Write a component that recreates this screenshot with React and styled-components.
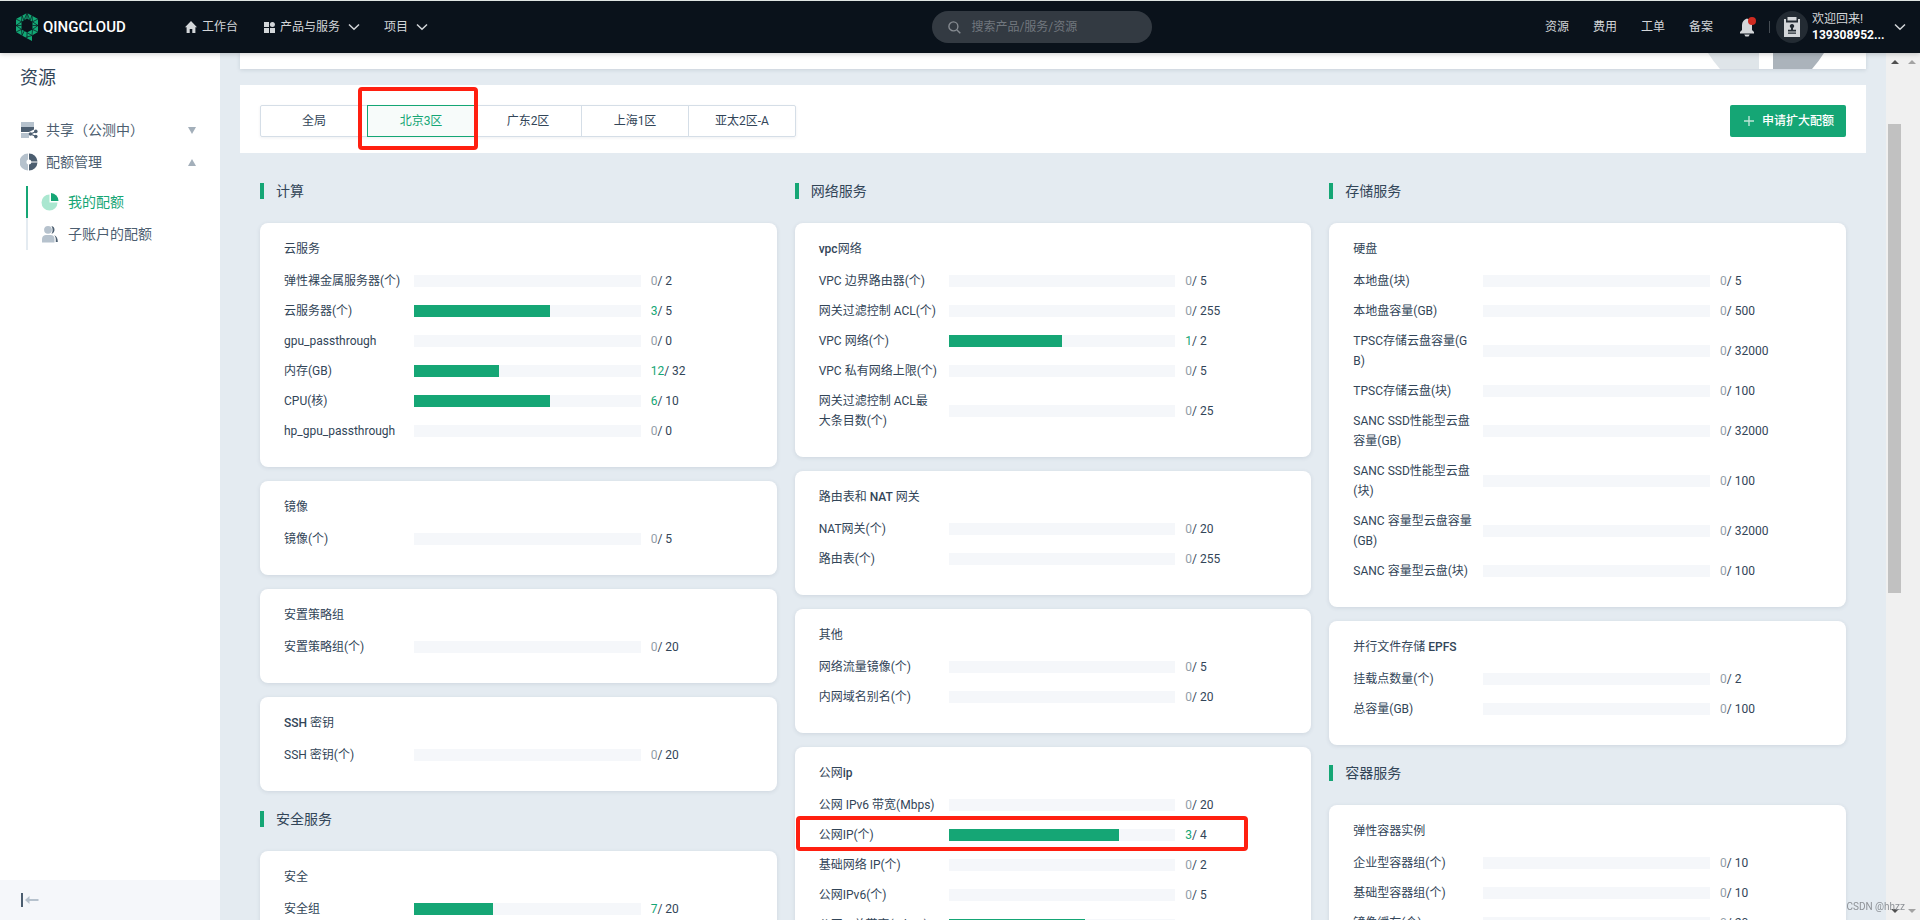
import React from 'react';
import styled, { createGlobalStyle } from 'styled-components'

const zones = ['全局', '北京3区', '广东2区', '上海1区', '亚太2区-A']

const columns = [
  [
    {
      title: '计算',
      cards: [
        {
          title: '云服务',
          rows: [
            ['弹性裸金属服务器(个)', 0, 2],
            ['云服务器(个)', 3, 5],
            ['gpu_passthrough', 0, 0],
            ['内存(GB)', 12, 32],
            ['CPU(核)', 6, 10],
            ['hp_gpu_passthrough', 0, 0],
          ],
        },
        { title: '镜像', rows: [['镜像(个)', 0, 5]] },
        { title: '安置策略组', rows: [['安置策略组(个)', 0, 20]] },
        { title: 'SSH 密钥', rows: [['SSH 密钥(个)', 0, 20]] },
      ],
    },
    {
      title: '安全服务',
      cards: [{ title: '安全', rows: [['安全组', 7, 20]] }],
    },
  ],
  [
    {
      title: '网络服务',
      cards: [
        {
          title: 'vpc网络',
          rows: [
            ['VPC 边界路由器(个)', 0, 5],
            ['网关过滤控制 ACL(个)', 0, 255],
            ['VPC 网络(个)', 1, 2],
            ['VPC 私有网络上限(个)', 0, 5],
            ['网关过滤控制 ACL最大条目数(个)', 0, 25],
          ],
        },
        {
          title: '路由表和 NAT 网关',
          rows: [
            ['NAT网关(个)', 0, 20],
            ['路由表(个)', 0, 255],
          ],
        },
        {
          title: '其他',
          rows: [
            ['网络流量镜像(个)', 0, 5],
            ['内网域名别名(个)', 0, 20],
          ],
        },
        {
          title: '公网ip',
          rows: [
            ['公网 IPv6 带宽(Mbps)', 0, 20],
            ['公网IP(个)', 3, 4, true],
            ['基础网络 IP(个)', 0, 2],
            ['公网IPv6(个)', 0, 5],
            ['公网IP总带宽(Mbps)', 12, 20],
          ],
        },
      ],
    },
  ],
  [
    {
      title: '存储服务',
      cards: [
        {
          title: '硬盘',
          rows: [
            ['本地盘(块)', 0, 5],
            ['本地盘容量(GB)', 0, 500],
            ['TPSC存储云盘容量(GB)', 0, 32000],
            ['TPSC存储云盘(块)', 0, 100],
            ['SANC SSD性能型云盘容量(GB)', 0, 32000],
            ['SANC SSD性能型云盘(块)', 0, 100],
            ['SANC 容量型云盘容量(GB)', 0, 32000],
            ['SANC 容量型云盘(块)', 0, 100],
          ],
        },
        {
          title: '并行文件存储 EPFS',
          rows: [
            ['挂载点数量(个)', 0, 2],
            ['总容量(GB)', 0, 100],
          ],
        },
      ],
    },
    {
      title: '容器服务',
      cards: [
        {
          title: '弹性容器实例',
          rows: [
            ['企业型容器组(个)', 0, 10],
            ['基础型容器组(个)', 0, 10],
            ['镜像缓存(个)', 0, 20],
          ],
        },
      ],
    },
  ],
]

function Chevron() {
  return (
    <svg width="12" height="8" viewBox="0 0 12 8" fill="none" stroke="#d3d6d9" strokeWidth="1.5">
      <path d="M1 1.5 6 6.2 11 1.5" />
    </svg>
  )
}

function Logo() {
  return (
    <svg width="22" height="28" viewBox="0 0 22 28">
      <path
        fill="#12a875"
        fillRule="evenodd"
        d="M11 0 22 6V19L16 22.5V28L9.5 24.5 0 19V6ZM11 5.5 5.5 8.8V16.4L11 19.6 16.5 16.4V8.8Z"
      />
      <path
        fill="none"
        stroke="#0a121b"
        strokeWidth="0.7"
        d="M11 0V5.5M6 2.5 8 7.5M16 2.5 14 7.5M11 0 8 7.5M11 0 14 7.5M0 6 5.5 8.8M22 6 16.5 8.8M6 2.5 5.5 8.8M16 2.5 16.5 8.8M0 12.5 5.5 8.8M0 12.5H5.5M0 12.5 5.5 16.4M22 12.5 16.5 8.8M22 12.5H16.5M22 12.5 16.5 16.4M0 19 5.5 16.4M22 19 16.5 16.4M6 22.5 5.5 16.4M6 22.5 8.2 18M11 25V19.6M16 22.5 16.5 16.4M16 22.5 11 19.6M16 22.5 9.5 24.5"
      />
    </svg>
  )
}

function Header() {
  return (
    <TopBar>
      <Brand href="#">
        <Logo />
        <BrandName>QINGCLOUD</BrandName>
      </Brand>
      <MainNav>
        <NavLink href="#">
          <svg width="12" height="12" viewBox="0 0 12 12" fill="#d3d6d9">
            <path d="M6 0 12 6.2H10.4V12H7.3V8H4.7V12H1.6V6.2H0Z" />
          </svg>
          工作台
        </NavLink>
        <NavButton $pad={26}>
          <svg width="11" height="11" viewBox="0 0 11 11" fill="#d3d6d9">
            <rect width="5" height="5" />
            <circle cx="8.4" cy="2.6" r="2.5" />
            <rect y="6" width="5" height="5" />
            <rect x="6" y="6" width="5" height="5" />
          </svg>
          产品与服务
          <ChevronGap><Chevron /></ChevronGap>
        </NavButton>
        <NavButton $pad={24}>
          项目
          <ChevronGap><Chevron /></ChevronGap>
        </NavButton>
      </MainNav>
      <Search>
        <svg width="13" height="13" viewBox="0 0 13 13" fill="none" stroke="#868b91" strokeWidth="1.4">
          <circle cx="5.4" cy="5.4" r="4.5" />
          <path d="M8.7 8.7 12.3 12.3" />
        </svg>
        <SearchInput type="text" aria-label="搜索" placeholder="搜索产品/服务/资源" />
      </Search>
      <UserNav>
        <NavLink href="#">资源</NavLink>
        <NavLink href="#">费用</NavLink>
        <NavLink href="#">工单</NavLink>
        <NavLink href="#">备案</NavLink>
      </UserNav>
      <Bell aria-label="通知">
        <svg width="18" height="20" viewBox="0 0 18 20">
          <path fill="#d3d6d9" d="M8 1.5C5 2.6 3 4.800 3 8V13L1 15V16.5H15V15L13 13V8C13 4.800 11 2.6 8 1.5ZM5.2 17.5H10.8L9.5 19.5H6.5Z" />
          <circle cx="13" cy="4" r="4" fill="#cf2a20" />
        </svg>
      </Bell>
      <Divider />
      <Account>
        <Avatar>
          <svg width="16" height="20" viewBox="0 0 16 20">
            <path fill="#d3d6d9" d="M0 2H2V5.5H14V2H16V20H0ZM3.5 0H12.5V3.5H3.5Z" />
            <path fill="#232b33" d="M8 7A2.1 2.1 0 0 1 9 11V12.8H12V14.5H4V12.8H7V11A2.1 2.1 0 0 1 8 7ZM4 15.5H12V16.8H4Z" />
          </svg>
        </Avatar>
        <Welcome>
          <span>欢迎回来!</span>
          <strong>139308952...</strong>
        </Welcome>
        <Chevron />
      </Account>
    </TopBar>
  )
}

function Side() {
  return (
    <Sidebar>
      <SideTitle>资源</SideTitle>
      <Menu>
        <MenuButton>
          <svg width="18" height="18" viewBox="0 0 18 18">
            <path fill="#b6c2cd" d="M1 1H14V6H1ZM1 12H9V17H1Z" />
            <path fill="#4c5e70" d="M1 6H14V8.5L9 11H1Z" />
            <path fill="none" stroke="#4c5e70" strokeWidth="1.1" d="M16 10.5 10.5 13 16 15.5" />
            <g fill="#4c5e70">
              <circle cx="10.5" cy="13" r="1.8" />
              <circle cx="15.8" cy="10.4" r="1.8" />
              <circle cx="15.8" cy="15.6" r="1.8" />
            </g>
          </svg>
          <MenuText>共享（公测中）</MenuText>
          <Caret $down />
        </MenuButton>
        <MenuButton>
          <svg width="18" height="18" viewBox="0 0 18 18">
            <path fill="#b6c2cd" d="M8 0.5V6.6A2.6 2.6 0 0 0 8 11.4V17.5A8.5 8.5 0 0 1 8 0.5Z" />
            <path fill="#4c5e70" d="M9 0.5A8.5 8.5 0 0 1 17.5 8.5H11.4A2.6 2.6 0 0 0 9 6.6ZM17.5 9.5A8.5 8.5 0 0 1 9 17.5V11.4A2.6 2.6 0 0 0 11.4 9.5Z" />
          </svg>
          <MenuText>配额管理</MenuText>
          <Caret />
        </MenuButton>
      </Menu>
      <SubMenu>
        <SubLink href="#" $active>
          <svg width="18" height="18" viewBox="0 0 18 18">
            <path fill="#aae7d0" d="M8.5 1.5V9.5H16.5A8 8 0 1 1 8.5 1.5Z" />
            <path fill="#15a675" d="M10 0A8 8 0 0 1 17.5 8H10Z" />
          </svg>
          我的配额
        </SubLink>
        <SubLink href="#">
          <svg width="18" height="18" viewBox="0 0 18 18">
            <path fill="#4c5e70" d="M10.5 1C14.5 1.5 14.5 8 10.5 8.8C12 6.5 12 3.5 10.5 1ZM13 10.2C15.5 11 16.8 13 16.8 17H14.8V14C14.8 12.5 14.2 11.2 13 10.2Z" />
            <circle cx="7" cy="4.8" r="3.9" fill="#b6c2cd" />
            <path fill="#b6c2cd" d="M1 17.5V14C1 11.5 3 10 5 10H9.5C12 10 13.5 11.5 13.5 14V17.5Z" />
          </svg>
          子账户的配额
        </SubLink>
      </SubMenu>
      <SideFooter aria-label="收起">
        <svg width="18" height="14" viewBox="0 0 18 14">
          <path fill="#4c5e70" d="M0 0H2V14H0Z" />
          <path fill="#b6c2cd" d="M4 7 8.5 3V6H17.5V8H8.5V11Z" />
        </svg>
      </SideFooter>
    </Sidebar>
  )
}

function QuotaRow({ name, used, total, marked }) {
  const percent = total ? (used / total) * 100 : 0
  return (
    <Row>
      <RowName>{name}</RowName>
      <Track role="progressbar" aria-label={name} aria-valuenow={used} aria-valuemax={total}>
        <Fill style={{ width: `${percent}%` }} />
      </Track>
      <Amount>
        <Used $on={used > 0}>{used}</Used>/ {total}
      </Amount>
      {marked && <RowMark />}
    </Row>
  )
}

// latin words in a card title are a bit heavier than the chinese ones
function Title({ text }) {
  return (
    <CardTitle>
      {text.split(/([a-z]+)/i).map((part, i) => (i % 2 ? <Latin key={i}>{part}</Latin> : part))}
    </CardTitle>
  )
}

function App() {
  return (
    <Page>
      <GlobalStyle />
      <Header />
      <Body>
        <Side />
        <Main>
          <Banner>
            <svg width="116" height="16" viewBox="0 0 116 16">
              <path fill="#dfe5e9" d="M0 0H51V16H12Q5 8 0 0Z" />
              <path fill="#abb3bb" d="M65 0H116Q111 8 104 16H65Z" />
            </svg>
          </Banner>
          <Toolbar>
            <Tabs>
              {zones.map((zone) => (
                <Tab key={zone} $active={zone === '北京3区'}>
                  {zone}
                  {zone === '北京3区' && <TabMark />}
                </Tab>
              ))}
            </Tabs>
            <ApplyButton>
              <svg width="10" height="10" viewBox="0 0 10 10" stroke="#bfe6d8" strokeWidth="1.4">
                <path d="M5 0V10M0 5H10" />
              </svg>
              申请扩大配额
            </ApplyButton>
          </Toolbar>
          <Columns>
            {columns.map((sections, i) => (
              <Column key={i}>
                {sections.map((section) => (
                  <Section key={section.title}>
                    <SectionTitle>{section.title}</SectionTitle>
                    {section.cards.map((card) => (
                      <Card key={card.title}>
                        <Title text={card.title} />
                        <Rows>
                          {card.rows.map(([name, used, total, marked]) => (
                            <QuotaRow key={name} name={name} used={used} total={total} marked={marked} />
                          ))}
                        </Rows>
                      </Card>
                    ))}
                  </Section>
                ))}
              </Column>
            ))}
          </Columns>
        </Main>
        <ScrollBar>
          <Arrow $up />
          <Thumb />
          <Arrow />
        </ScrollBar>
        <ScrollBar>
          <Arrow $up $idle />
          <Arrow $idle />
        </ScrollBar>
      </Body>
      <Watermark>CSDN @hhzz</Watermark>
    </Page>
  )
}

export default App;

const GlobalStyle = createGlobalStyle`
    * {
        box-sizing: border-box;
    }

    body {
        margin: 0;
        font-family: Roboto, "Noto Sans CJK SC", sans-serif;
        font-size: 12px;
        line-height: 20px;
        color: #324558;
    }

    button {
        font: inherit;
        color: inherit;
        background: none;
        border: 0;
        padding: 0;
        cursor: pointer;
    }

    a {
        color: inherit;
        text-decoration: none;
    }

    svg {
        flex: none;
        display: block;
    }
`

const Page = styled.div`
    display: flex;
    flex-direction: column;
    height: 100vh;
    overflow: hidden;
`

const TopBar = styled.header`
    display: flex;
    align-items: center;
    flex: none;
    height: 53px;
    padding: 0 14px 0 16px;
    border-top: 1px solid #dfe5e2;
    background: #0a121b;
    color: #d3d6d9;
    box-shadow: 0 1px 5px rgba(0, 0, 0, 0.2);
    z-index: 1;
`

const Brand = styled.a`
    display: flex;
    align-items: center;
    gap: 5px;
    width: 169px;
`

const BrandName = styled.span`
    font-size: 15px;
    font-weight: 500;
    color: #fff;
`

const MainNav = styled.nav`
    display: flex;
    align-items: center;
    flex: 4;
`

const NavLink = styled.a`
    display: flex;
    align-items: center;
    gap: 5px;
`

const NavButton = styled.button`
    display: flex;
    align-items: center;
    gap: 5px;
    margin-left: ${(p) => p.$pad}px;
`

const ChevronGap = styled.span`
    padding-left: 3px;
`

const Search = styled.label`
    display: flex;
    align-items: center;
    gap: 10px;
    width: 220px;
    height: 32px;
    padding: 0 16px;
    border-radius: 16px;
    background: #333a42;
`

const SearchInput = styled.input`
    flex: 1;
    min-width: 0;
    padding: 0;
    border: 0;
    outline: 0;
    background: none;
    font: inherit;
    color: #fff;

    &::placeholder {
        color: #71777e;
        opacity: 1;
    }
`

const UserNav = styled.nav`
    display: flex;
    justify-content: flex-end;
    gap: 24px;
    flex: 3;
`

const Bell = styled.button`
    margin-left: 26px;
`

const Divider = styled.span`
    width: 1px;
    height: 12px;
    margin: 0 6px 0 12px;
    background: #454c53;
`

const Account = styled.button`
    display: flex;
    align-items: center;
    text-align: left;
`

const Avatar = styled.span`
    display: flex;
    align-items: center;
    justify-content: center;
    width: 32px;
    height: 32px;
    margin-right: 4px;
    border-radius: 50%;
    background: #232b33;
`

const Welcome = styled.span`
    display: flex;
    flex-direction: column;
    width: 82px;
    line-height: 16px;

    strong {
        color: #fff;
    }
`

const Body = styled.div`
    display: flex;
    flex: 1;
    min-height: 0;
`

const Sidebar = styled.aside`
    display: flex;
    flex-direction: column;
    width: 220px;
    flex: none;
    background: #fff;
    font-size: 14px;
    color: #4c5e70;
`

const SideTitle = styled.h1`
    margin: 0;
    padding: 12px 20px 24px;
    font-size: 18px;
    font-weight: 400;
    line-height: 25px;
    color: #324558;
`

const Menu = styled.div`
    display: flex;
    flex-direction: column;
`

const MenuButton = styled.button`
    display: flex;
    align-items: center;
    gap: 8px;
    height: 32px;
    padding: 0 24px 0 20px;
`

const MenuText = styled.span`
    flex: 1;
    text-align: left;
`

const Caret = styled.span`
    border: 4px solid transparent;
    border-top: ${(p) => (p.$down ? '7px solid #a3afba' : '0')};
    border-bottom: ${(p) => (p.$down ? '0' : '7px solid #a3afba')};
`

const SubMenu = styled.nav`
    display: flex;
    flex-direction: column;
    margin: 8px 0 0 26px;
`

const SubLink = styled.a`
    display: flex;
    align-items: center;
    gap: 9px;
    height: 32px;
    padding-left: 13px;
    border-left: 2px solid ${(p) => (p.$active ? '#15a675' : '#e4ebf1')};
    color: ${(p) => (p.$active ? '#15a675' : '#4c5e70')};
`

const SideFooter = styled.button`
    display: flex;
    align-items: center;
    height: 40px;
    margin-top: auto;
    padding-left: 21px;
    background: #f5f7fa;
`

const Main = styled.main`
    flex: 1;
    min-width: 0;
    padding: 0 20px;
    overflow: hidden;
    background: #e4ebf1;
`

const Banner = styled.div`
    display: flex;
    justify-content: flex-end;
    padding-right: 42px;
    background: #fff;
    box-shadow: 0 1px 4px rgba(50, 69, 88, 0.15);
`

const Toolbar = styled.div`
    display: flex;
    align-items: center;
    justify-content: space-between;
    margin-top: 16px;
    padding: 20px 20px 16px;
    background: #fff;
`

const Tabs = styled.div`
    display: flex;
    border-radius: 2px;
    box-shadow: 0 1px 3px rgba(50, 69, 88, 0.08);
`

const Tab = styled.button`
    position: relative;
    width: 108px;
    height: 32px;
    border: 1px solid ${(p) => (p.$active ? '#15a675' : '#d5dee7')};
    background: ${(p) => (p.$active ? '#f7fbfa' : '#fff')};
    color: ${(p) => (p.$active ? '#15a675' : '#324558')};
    z-index: ${(p) => (p.$active ? 1 : 0)};

    & + & {
        margin-left: -1px;
    }

    &:first-child {
        border-radius: 2px 0 0 2px;
    }

    &:last-child {
        border-radius: 0 2px 2px 0;
    }
`

const Mark = styled.span`
    position: absolute;
    border: 4px solid #ff1f10;
    border-radius: 4px;
    pointer-events: none;
`

const TabMark = styled(Mark)`
    inset: -19px -4px -14px -10px;
`

const RowMark = styled(Mark)`
    inset: -9px 39px -6px -23px;
`

const ApplyButton = styled.button`
    display: flex;
    align-items: center;
    gap: 8px;
    height: 32px;
    padding: 0 12px 0 14px;
    border-radius: 2px;
    background: #15a675;
    color: #fff;
    font-weight: 500;
`

const Columns = styled.div`
    display: grid;
    grid-template-columns: repeat(3, 1fr);
    gap: 18px;
    padding: 10px 20px 0;
`

const Column = styled.div`
    min-width: 0;
`

const Section = styled.section`
    padding-top: 20px;
`

const SectionTitle = styled.h2`
    margin: 0 0 24px;
    padding-left: 12px;
    border-left: 4px solid #15a675;
    font-size: 14px;
    font-weight: 400;
    line-height: 16px;
`

const Card = styled.div`
    padding: 16px 24px;
    border-radius: 8px;
    background: #fff;
    box-shadow: 0 1px 4px rgba(50, 69, 88, 0.12);

    & + & {
        margin-top: 14px;
    }
`

const CardTitle = styled.h3`
    margin: 0 0 12px;
    font-size: 12px;
    font-weight: 400;
`

const Latin = styled.span`
    font-weight: 500;
`

const Rows = styled.ul`
    margin: 0;
    padding: 0;
    list-style: none;
`

const Row = styled.li`
    position: relative;
    display: grid;
    grid-template-columns: 120px 1fr 102px;
    gap: 10px;
    align-items: center;
    margin-bottom: 10px;
`

const RowName = styled.span`
    word-break: break-all;
`

const Track = styled.div`
    height: 12px;
    background: #f5f7fa;
`

const Fill = styled.div`
    height: 100%;
    background: #15a675;
`

const Amount = styled.span`
    white-space: nowrap;
`

const Used = styled.span`
    color: ${(p) => (p.$on ? '#15a675' : '#939ea9')};
`

const ScrollBar = styled.div`
    display: flex;
    flex-direction: column;
    align-items: center;
    width: 17px;
    flex: none;
    padding: 7px 0;
    background: #f0f0f0;
`

const Arrow = styled.span`
    border: 4px solid transparent;
    border-top: ${(p) => (p.$up ? '0' : `4px solid ${p.$idle ? '#a3a3a3' : '#505050'}`)};
    border-bottom: ${(p) => (p.$up ? `4px solid ${p.$idle ? '#a3a3a3' : '#505050'}` : '0')};

    &:last-child {
        margin-top: auto;
    }
`

const Thumb = styled.span`
    width: 13px;
    height: 55%;
    margin-top: 60px;
    background: #c1c1c1;
`

const Watermark = styled.span`
    position: fixed;
    right: 15px;
    bottom: 3px;
    font-size: 10px;
    color: #8d9196;
    z-index: 2;
`
